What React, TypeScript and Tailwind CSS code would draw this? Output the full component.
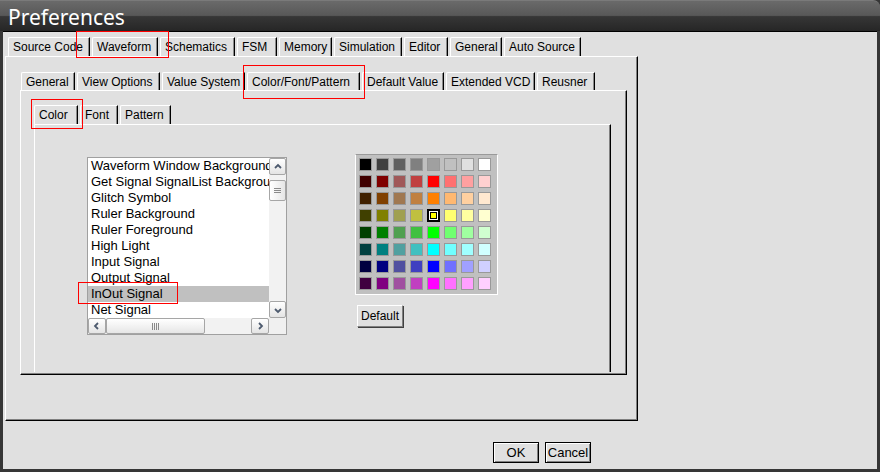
import React from "react";

const ui = "font-['Liberation_Sans',Arial,sans-serif]";

const outerTabs = [
  { label: "Source Code", w: "w-[82px]" },
  { label: "Waveform", w: "w-[66px]" },
  { label: "Schematics", w: "w-[75px]" },
  { label: "FSM", w: "w-[40px]" },
  { label: "Memory", w: "w-[53px]" },
  { label: "Simulation", w: "w-[68px]" },
  { label: "Editor", w: "w-[44px]" },
  { label: "General", w: "w-[52px]" },
  { label: "Auto Source", w: "w-[77px]" },
];

const midTabs = [
  { label: "General", w: "w-[54px]" },
  { label: "View Options", w: "w-[83px]" },
  { label: "Value System", w: "w-[83px]" },
  { label: "Color/Font/Pattern", w: "w-[113px]" },
  { label: "Default Value", w: "w-[82px]" },
  { label: "Extended VCD", w: "w-[89px]" },
  { label: "Reusner", w: "w-[58px]" },
];

const innerTabs = [
  { label: "Color", w: "w-[44px]" },
  { label: "Font", w: "w-[38px]" },
  { label: "Pattern", w: "w-[51px]" },
];

const items = [
  "Waveform Window Background",
  "Get Signal SignalList Background",
  "Glitch Symbol",
  "Ruler Background",
  "Ruler Foreground",
  "High Light",
  "Input Signal",
  "Output Signal",
  "InOut Signal",
  "Net Signal",
];

// palette, row by row
const palette = [
  "bg-[#000000]", "bg-[#404040]", "bg-[#606060]", "bg-[#808080]", "bg-[#a0a0a0]", "bg-[#c0c0c0]", "bg-[#e0e0e0]", "bg-[#ffffff]",
  "bg-[#400000]", "bg-[#800000]", "bg-[#a05858]", "bg-[#c04040]", "bg-[#ff0000]", "bg-[#ff7070]", "bg-[#ffa0a0]", "bg-[#ffd0d0]",
  "bg-[#402000]", "bg-[#804000]", "bg-[#a07850]", "bg-[#c08040]", "bg-[#ff8000]", "bg-[#ffb870]", "bg-[#ffd0a0]", "bg-[#ffe8d0]",
  "bg-[#404000]", "bg-[#808000]", "bg-[#a0a050]", "bg-[#c0c040]", "bg-[#ffff00]", "bg-[#ffff70]", "bg-[#ffffa0]", "bg-[#ffffd0]",
  "bg-[#004000]", "bg-[#008000]", "bg-[#50a050]", "bg-[#40c040]", "bg-[#00ff00]", "bg-[#70ff70]", "bg-[#a0ffa0]", "bg-[#d0ffd0]",
  "bg-[#004040]", "bg-[#008080]", "bg-[#50a0a0]", "bg-[#40c0c0]", "bg-[#00ffff]", "bg-[#70ffff]", "bg-[#a0ffff]", "bg-[#d0ffff]",
  "bg-[#000040]", "bg-[#000080]", "bg-[#5050a0]", "bg-[#4040c0]", "bg-[#0000ff]", "bg-[#7070ff]", "bg-[#a0a0ff]", "bg-[#d0d0ff]",
  "bg-[#400040]", "bg-[#800080]", "bg-[#a050a0]", "bg-[#c040c0]", "bg-[#ff00ff]", "bg-[#ff70ff]", "bg-[#ffa0ff]", "bg-[#ffd0ff]",
];

const Tab = ({ label, w, h }: { label: string; w: string; h: string }) => (
  <div
    className={`${w} ${h} flex items-center pl-[4px] border-t border-l border-white border-r border-r-black shadow-[inset_-1px_0_0_#8a8a8a] rounded-tl-[2px] text-[12px] text-black whitespace-nowrap overflow-hidden`}
  >
    {label}
  </div>
);

const Chevron = ({ dir }: { dir: "up" | "down" | "left" | "right" }) => {
  const d = {
    up: "M2 6 L5 3 L8 6",
    down: "M2 4 L5 7 L8 4",
    left: "M6 2 L3 5 L6 8",
    right: "M4 2 L7 5 L4 8",
  }[dir];
  return (
    <svg width="10" height="10" viewBox="0 0 10 10">
      <path d={d} fill="none" stroke="#4d5a6e" strokeWidth="1.8" />
    </svg>
  );
};

const SbButton = ({ dir, className = "" }: { dir: "up" | "down" | "left" | "right"; className?: string }) => (
  <div
    className={`flex items-center justify-center border border-[#a6a6a6] rounded-[2px] bg-[linear-gradient(to_bottom,#ffffff,#e4e4e4)] ${className}`}
  >
    <Chevron dir={dir} />
  </div>
);

const ListBox = () => (
  <div className="w-[200px] h-[178px] border border-[#a0a0a0] bg-white grid grid-cols-[181px_17px] grid-rows-[160px_16px]">
    <div className="overflow-hidden">
      {items.map((it) => (
        <div
          key={it}
          className={`h-[16px] leading-[16px] pl-[3px] text-[13px] text-black whitespace-nowrap ${
            it === "InOut Signal" ? "bg-[#c0c0c0]" : ""
          }`}
        >
          {it}
        </div>
      ))}
    </div>
    {/* vertical scrollbar */}
    <div className="bg-[#f2f2f2] flex flex-col">
      <SbButton dir="up" className="h-[17px] w-[17px]" />
      <div className="mt-[5px] h-[21px] w-[17px] border border-[#a6a6a6] rounded-[2px] bg-[linear-gradient(to_right,#ffffff,#e6e6e6)] flex flex-col items-center justify-center gap-[1px]">
        <div className="w-[7px] h-[1px] bg-[#8a8a8a]" />
        <div className="w-[7px] h-[1px] bg-[#8a8a8a]" />
        <div className="w-[7px] h-[1px] bg-[#8a8a8a]" />
      </div>
      <div className="flex-1" />
      <SbButton dir="down" className="h-[17px] w-[17px]" />
    </div>
    {/* horizontal scrollbar */}
    <div className="bg-[#f2f2f2] flex">
      <SbButton dir="left" className="w-[18px] h-[16px]" />
      <div className="w-[99px] h-[16px] border border-[#a6a6a6] rounded-[2px] bg-[linear-gradient(to_bottom,#ffffff,#e6e6e6)] flex items-center justify-center gap-[1px]">
        <div className="w-[1px] h-[7px] bg-[#8a8a8a]" />
        <div className="w-[1px] h-[7px] bg-[#8a8a8a]" />
        <div className="w-[1px] h-[7px] bg-[#8a8a8a]" />
        <div className="w-[1px] h-[7px] bg-[#8a8a8a]" />
      </div>
      <div className="flex-1" />
      <SbButton dir="right" className="w-[18px] h-[16px]" />
    </div>
    <div className="bg-[#f0f0f0]" />
  </div>
);

const ColorGrid = () => (
  <div className="w-[143px] h-[141px] border border-t-[#9a9a9a] border-l-white border-r-white border-b-white bg-[#c0c0c0] p-[3px]">
    <div className="grid grid-cols-[repeat(8,13px)] auto-rows-[13px] gap-[4px]">
      {palette.map((c, i) =>
        i === 28 ? (
          <div key={i} className="border-2 border-black bg-white p-[1px]">
            <div className="w-full h-full border border-black bg-[#ffff00]" />
          </div>
        ) : (
          <div key={i} className={`border border-[#999999] ${c}`} />
        )
      )}
    </div>
  </div>
);

const Button = ({ label, className = "" }: { label: string; className?: string }) => (
  <div
    className={`flex items-center justify-center border border-black bg-[#e0e0e0] shadow-[inset_1px_1px_0_#ffffff,inset_-1px_-1px_0_#808080] text-black ${className}`}
  >
    {label}
  </div>
);

export default function App() {
  return (
    <div className={`${ui} relative w-[880px] h-[472px] bg-[#363636] flex flex-col overflow-hidden`}>
      {/* title bar */}
      <div className="h-[31px] shrink-0 rounded-tr-[7px] border-t border-[#7a7a7a] bg-[linear-gradient(to_bottom,#6a6a6a_0%,#585858_48%,#363636_52%,#262626_100%)] flex items-center pl-[8px] pt-[2px]">
        <span className="font-['Noto_Sans',sans-serif] text-[21px] text-white leading-none">Preferences</span>
      </div>

      {/* body */}
      <div className="flex-1 mx-[3px] mb-[3px] bg-[#e0e0e0] border-t border-black flex flex-col pl-[2px] pt-[5px]">
        {/* outer tabs */}
        <div className="flex gap-[2px] pl-[3px]">
          {outerTabs.map((t) => (
            <Tab key={t.label} label={t.label} w={t.w} h="h-[19px]" />
          ))}
        </div>
        <div className="w-[633px] h-[365px] border-t border-l border-white border-r border-b border-r-black border-b-black shadow-[inset_-1px_-1px_0_#808080] flex flex-col pl-[14px] pt-[15px]">
          {/* middle tabs */}
          <div className="flex gap-[2px] pl-[1px]">
            {midTabs.map((t) => (
              <Tab key={t.label} label={t.label} w={t.w} h="h-[18px]" />
            ))}
          </div>
          <div className="w-[607px] h-[285px] border-t border-l border-white border-r border-b border-r-black border-b-black shadow-[inset_-1px_-1px_0_#808080] flex flex-col pl-[13px] pt-[14px]">
            {/* inner tabs */}
            <div className="flex gap-[2px]">
              {innerTabs.map((t) => (
                <Tab key={t.label} label={t.label} w={t.w} h="h-[19px]" />
              ))}
            </div>
            <div className="w-[577px] h-[248px] border-t border-l border-white border-r border-r-black shadow-[inset_-1px_0_0_#808080] flex items-start pl-[52px]">
              <div className="mt-[32px]">
                <ListBox />
              </div>
              <div className="ml-[68px] mt-[29px] flex flex-col">
                <ColorGrid />
                <div className="mt-[10px] ml-[2px] w-[46px] h-[22px] flex items-center justify-center border border-white border-r-[#808080] border-b-[#808080] shadow-[1px_1px_0_#404040] text-[12px] text-black">
                  Default
                </div>
              </div>
            </div>
          </div>
        </div>

        {/* footer */}
        <div className="flex gap-[6px] ml-[488px] mt-[21px]">
          <Button label="OK" className="w-[46px] h-[21px] text-[13px]" />
          <Button label="Cancel" className="w-[46px] h-[21px] text-[13px]" />
        </div>
      </div>

      {/* red annotation boxes */}
      <div className="absolute left-[76px] top-[31px] w-[93px] h-[27px] border border-[#ff0000]" />
      <div className="absolute left-[243px] top-[65px] w-[122px] h-[34px] border border-[#ff0000]" />
      <div className="absolute left-[31px] top-[99px] w-[52px] h-[30px] border border-[#ff0000]" />
      <div className="absolute left-[78px] top-[282px] w-[100px] h-[22px] border border-[#ff0000]" />
    </div>
  );
}
